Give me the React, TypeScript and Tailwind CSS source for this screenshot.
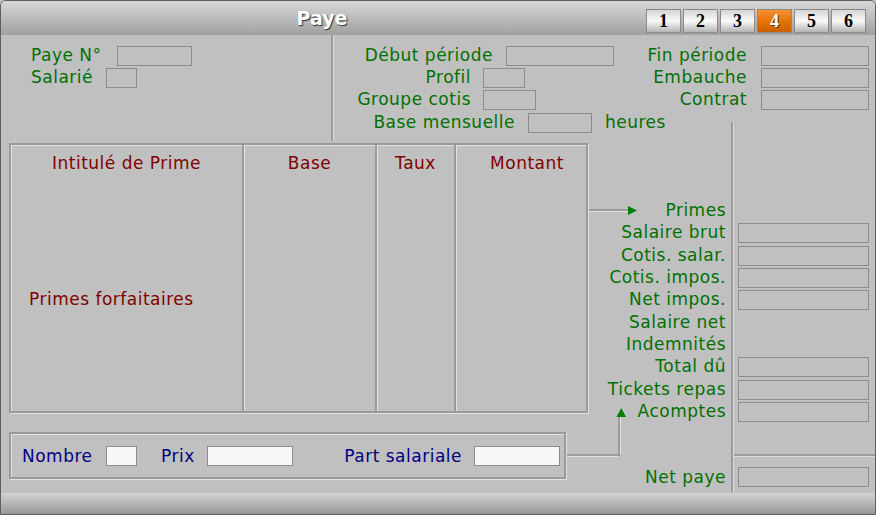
import React from 'react';

// couleurs des libellés
const GREEN = 'text-[#007000]';
const RED = 'text-[#800000]';
const NAVY = 'text-[#000080]';

function Field({ className }: { className: string }) {
  return <div className={`h-[20px] shrink-0 border border-[#8c8c8c] ${className}`} />;
}

const tabs = ['1', '2', '3', '4', '5', '6'];

// lignes de la colonne des totaux (libellé, avec champ ?)
const totaux: [string, boolean][] = [
  ['Primes', false],
  ['Salaire brut', true],
  ['Cotis. salar.', true],
  ['Cotis. impos.', true],
  ['Net impos.', true],
  ['Salaire net', false],
  ['Indemnités', false],
  ['Total dû', true],
  ['Tickets repas', true],
  ['Acomptes', true],
];

export default function App() {
  return (
    <div className="w-[876px] h-[515px] bg-[#c0c0c0] font-['DejaVu_Sans',sans-serif] text-[17px] leading-[20px] tracking-[0.5px]">
      <div className="relative w-full h-full flex flex-col border border-[#5f5f5f] rounded-t-[6px] overflow-hidden">
        {/* barre de titre */}
        <div className="h-[34px] shrink-0 flex tracking-normal bg-linear-to-b from-[#d8d8d8] to-[#a0a0a0]">
          <div className="flex-1 flex items-center justify-center pr-[3px] text-[19px] font-bold text-white [text-shadow:1px_1px_1px_#303030]">
            Paye
          </div>
          <div className="flex gap-[2px] pt-[8px] pr-[9px]">
            {tabs.map((t) => (
              <div
                key={t}
                className={
                  t === '4'
                    ? "w-[35px] h-[24px] flex items-center justify-center border border-[#8a8a8a] bg-linear-to-b from-[#f59030] via-[#e87400] to-[#c96000] font-['Liberation_Serif',serif] font-bold text-[18px] text-white [text-shadow:1px_1px_0_#6a3000]"
                    : "w-[35px] h-[24px] flex items-center justify-center border border-[#8a8a8a] bg-linear-to-b from-[#d4d4d4] via-[#fafafa] to-[#b4b4b4] font-['Liberation_Serif',serif] font-bold text-[18px] text-black"
                }
              >
                {t}
              </div>
            ))}
          </div>
        </div>

        {/* partie haute */}
        <div className="h-[106px] shrink-0 flex">
          <div className="w-[330px] pt-[10px] pl-[30px]">
            <div className="flex items-center h-[22px]">
              <span className={`w-[86px] pb-[2px] ${GREEN}`}>Paye N°</span>
              <Field className="w-[75px]" />
            </div>
            <div className="flex items-center h-[22px]">
              <span className={`w-[75px] pb-[2px] ${GREEN}`}>Salarié</span>
              <Field className="w-[31px]" />
            </div>
          </div>
          <div className="w-[3px] border-l-2 border-[#9b9b9b] bg-[#dcdcdc]" />
          <div className="flex-1 flex flex-col pt-[10px]">
            <div className="flex items-center h-[22px]">
              <span className={`w-[159px] pb-[2px] text-right ${GREEN}`}>Début période</span>
              <Field className="ml-[13px] w-[108px]" />
              <span className={`w-[133px] pb-[2px] text-right ${GREEN}`}>Fin période</span>
              <Field className="ml-[14px] w-[108px]" />
            </div>
            <div className="flex items-center h-[22px]">
              <span className={`w-[137px] pb-[2px] text-right ${GREEN}`}>Profil</span>
              <Field className="ml-[12px] w-[42px]" />
              <span className={`w-[222px] pb-[2px] text-right ${GREEN}`}>Embauche</span>
              <Field className="ml-[14px] w-[108px]" />
            </div>
            <div className="flex items-center h-[22px]">
              <span className={`w-[137px] pb-[2px] text-right ${GREEN}`}>Groupe cotis</span>
              <Field className="ml-[12px] w-[53px]" />
              <span className={`w-[211px] pb-[2px] text-right ${GREEN}`}>Contrat</span>
              <Field className="ml-[14px] w-[108px]" />
            </div>
            <div className="flex-1 flex">
              <div className="w-[397px] h-[22px] mt-[1px] flex items-center">
                <span className={`w-[181px] pb-[2px] text-right ${GREEN}`}>Base mensuelle</span>
                <Field className="ml-[13px] w-[64px]" />
                <span className={`ml-[13px] pb-[2px] ${GREEN}`}>heures</span>
              </div>
              <div className="w-[3px] mt-[11px] border-l-2 border-[#9b9b9b] bg-[#dcdcdc]" />
            </div>
          </div>
        </div>

        {/* partie basse */}
        <div className="flex-1 flex">
          <div className="w-[590px] pl-[8px] pt-[2px]">
            <div className="w-[579px] h-[270px] flex border-2 border-[#9a9a9a] shadow-[1px_1px_0_#e2e2e2]">
              <div className={`w-[231px] flex flex-col shadow-[inset_1px_1px_0_#e2e2e2] ${RED}`}>
                <div className="pt-[8px] text-center">Intitulé de Prime</div>
                <div className="mt-[116px] pl-[18px]">Primes forfaitaires</div>
              </div>
              <div className={`w-[133px] border-l-2 border-[#9a9a9a] shadow-[inset_1px_1px_0_#e2e2e2] pt-[8px] text-center ${RED}`}>
                Base
              </div>
              <div className={`w-[79px] border-l-2 border-[#9a9a9a] shadow-[inset_1px_1px_0_#e2e2e2] pt-[8px] text-center ${RED}`}>
                Taux
              </div>
              <div className={`flex-1 border-l-2 border-[#9a9a9a] shadow-[inset_1px_1px_0_#e2e2e2] pt-[8px] pl-[12px] text-center ${RED}`}>
                Montant
              </div>
            </div>
            <div className="mt-[19px] w-[557px] h-[47px] flex items-center pl-[11px] border-2 border-[#9a9a9a] shadow-[1px_1px_0_#e2e2e2,inset_1px_1px_0_#e2e2e2]">
              <span className={`w-[84px] ${NAVY}`}>Nombre</span>
              <Field className="w-[31px] bg-[#f7f7f7]" />
              <span className={`ml-[24px] w-[46px] ${NAVY}`}>Prix</span>
              <Field className="w-[86px] bg-[#f7f7f7]" />
              <span className={`w-[181px] pr-[12px] text-right ${NAVY}`}>Part salariale</span>
              <Field className="w-[86px] bg-[#f7f7f7]" />
            </div>
          </div>

          <div className="w-[140px] flex flex-col items-end pr-[5px] pt-[58px]">
            {totaux.map(([l]) => (
              <div key={l} className={`h-[22.3px] flex items-center ${GREEN}`}>
                {l}
              </div>
            ))}
            <div className={`mt-[44px] h-[22.3px] flex items-center ${GREEN}`}>Net paye</div>
          </div>

          <div className="w-[3px] mb-[1px] border-l-2 border-[#9b9b9b] bg-[#dcdcdc]" />

          <div className="flex-1 flex flex-col pt-[58px]">
            {totaux.map(([l, champ]) => (
              <div key={l} className="h-[22.3px] flex items-center pl-[4px]">
                {champ && <Field className="w-[131px] mt-[2px]" />}
              </div>
            ))}
            <div className="mt-[32px] h-[3px] border-t-2 border-[#9b9b9b] bg-[#dcdcdc]" />
            <div className="mt-[9px] h-[22.3px] flex items-center pl-[4px]">
              <Field className="w-[131px]" />
            </div>
          </div>
        </div>

        {/* barre du bas */}
        <div className="h-[21px] shrink-0 bg-linear-to-b from-[#d4d4d4] to-[#979797]" />

        {/* flèches de liaison */}
        <svg
          className="absolute -left-px -top-px pointer-events-none"
          width="876"
          height="515"
          viewBox="0 0 876 515"
        >
          <rect x="589" y="209" width="40" height="2" fill="#9b9b9b" />
          <rect x="589" y="211" width="40" height="1" fill="#e0e0e0" />
          <polygon points="628,206 637,210.5 628,215" fill="#008000" />
          <rect x="567" y="454" width="53" height="2" fill="#9b9b9b" />
          <rect x="567" y="456" width="51" height="1" fill="#e0e0e0" />
          <rect x="618" y="417" width="2" height="39" fill="#9b9b9b" />
          <rect x="620" y="417" width="1" height="37" fill="#e0e0e0" />
          <polygon points="616.5,417 621.3,408 626,417" fill="#008000" />
        </svg>
      </div>
    </div>
  );
}
